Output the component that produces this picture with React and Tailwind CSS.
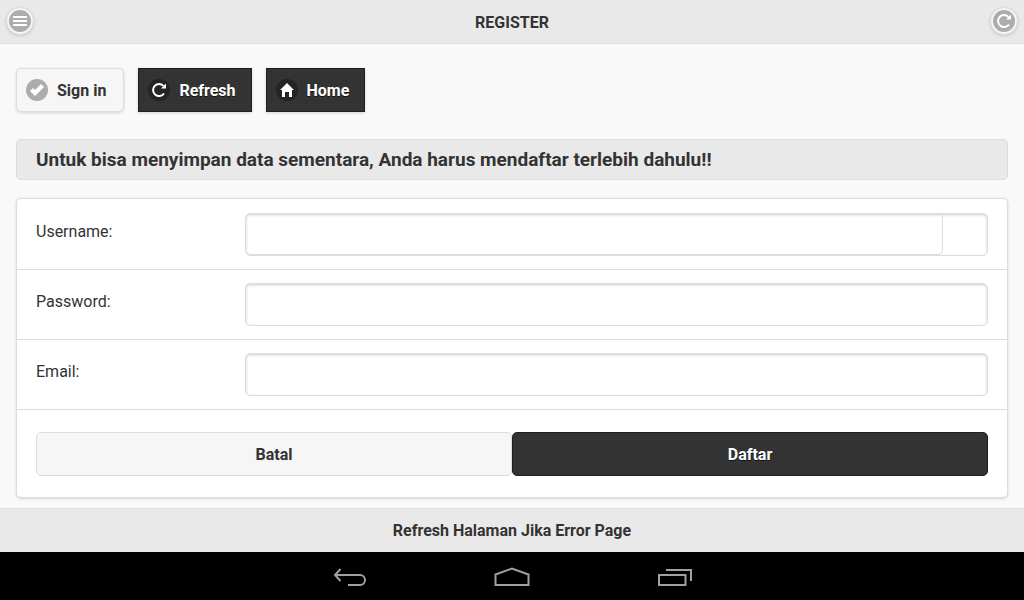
import { useState } from 'react'

function BarsIcon() {
  return (
    <svg viewBox="0 0 14 14" className="size-3.5" fill="#fff" aria-hidden="true">
      <rect y="2" width="14" height="2" rx="0.500" />
      <rect y="6" width="14" height="2" rx="0.500" />
      <rect y="10" width="14" height="2" rx="0.500" />
    </svg>
  )
}

function CheckIcon() {
  return (
    <svg viewBox="0 0 14 14" className="size-3.5" fill="#fff" aria-hidden="true">
      <polygon points="14,4 11,1 5,7 3,5 0,8 5,13" />
    </svg>
  )
}

function RefreshIcon() {
  return (
    <svg viewBox="0 0 14 14" className="size-3.5" fill="#fff" aria-hidden="true">
      <path d="M12 10.500A6 6 0 1 1 11.400 2.900" fill="none" stroke="#fff" strokeWidth="2" />
      <polygon points="14,0.500 14,5.500 9,5.500" />
    </svg>
  )
}

function HomeIcon() {
  return (
    <svg viewBox="0 0 14 14" className="size-3.5" fill="#fff" aria-hidden="true">
      <polygon points="7,0 0,7 2,7 2,14 5,14 5,9 9,9 9,14 12,14 12,7 14,7" />
    </svg>
  )
}

function RoundButton({ label, children }) {
  return (
    <button
      type="button"
      aria-label={label}
      className="flex size-7 items-center justify-center rounded-full border border-[#ddd] bg-[#f6f6f6] shadow-[0_1px_3px_rgba(0,0,0,0.15)]"
    >
      <span className="flex size-[22px] shrink-0 items-center justify-center rounded-full bg-[#acacac]">
        {children}
      </span>
    </button>
  )
}

function LinkButton({ dark, icon, children }) {
  return (
    <a
      href="#"
      className={`flex h-11 items-center gap-[9px] border pl-[9px] font-bold shadow-[0_1px_3px_rgba(0,0,0,0.15)] ${
        dark
          ? 'border-[#1f1f1f] bg-[#333] pr-[15px] text-white [text-shadow:0_1px_0_#111]'
          : 'rounded-[5px] border-[#ddd] bg-[#f6f6f6] pr-[17px] text-[#333] [text-shadow:0_1px_0_#f3f3f3]'
      }`}
    >
      <span
        className={`flex size-[22px] items-center justify-center rounded-full ${
          dark ? 'bg-[#242424]' : 'bg-[#acacac]'
        }`}
      >
        {icon}
      </span>
      <span className="pt-0.5">{children}</span>
    </a>
  )
}

function Field({ id, label, children }) {
  return (
    <div className="grid h-[70px] grid-cols-[22%_78%] border-b border-[#ddd] px-[19px] pt-[13px]">
      <label htmlFor={id} className="pt-[7px]">{label}</label>
      {children}
    </div>
  )
}

const boxStyle =
  'h-[43px] w-full rounded-[5px] border border-[#ddd] bg-white shadow-[inset_0_1px_3px_rgba(0,0,0,0.2)]'

export default function App() {
  const [form, setForm] = useState({ username: '', password: '', email: '' })

  const handleChange = (e) => {
    setForm({ ...form, [e.target.name]: e.target.value })
  }

  return (
    <div className="flex min-h-screen flex-col bg-[#f9f9f9] font-[Roboto,sans-serif] text-base/6 text-[#333]">
      <header className="flex h-11 items-center justify-between border-b border-[#ddd] bg-[#e9e9e9] px-1.5 pb-px">
        <RoundButton label="Menu"><BarsIcon /></RoundButton>
        <h1 className="pt-1 font-bold [text-shadow:0_1px_0_#eee]">REGISTER</h1>
        <RoundButton label="Refresh"><RefreshIcon /></RoundButton>
      </header>

      <main className="flex-1 px-4 pt-6 pb-2.5">
        <nav className="flex gap-3.5">
          <LinkButton icon={<CheckIcon />}>Sign in</LinkButton>
          <LinkButton dark icon={<RefreshIcon />}>Refresh</LinkButton>
          <LinkButton dark icon={<HomeIcon />}>Home</LinkButton>
        </nav>

        <h2 className="mt-[27px] rounded-[5px] border border-[#ddd] bg-[#e9e9e9] px-[19px] py-[7px] text-[19px]/[25px] font-bold [text-shadow:0_1px_0_#eee]">
          Untuk bisa menyimpan data sementara, Anda harus mendaftar terlebih dahulu!!
        </h2>

        <form
          onSubmit={(e) => e.preventDefault()}
          className="mt-[18px] rounded-[5px] border border-[#ddd] bg-white pt-px shadow-[0_1px_3px_rgba(0,0,0,0.15)]"
        >
          <Field id="username" label="Username:">
            <div className={`${boxStyle} pr-11`}>
              <input
                id="username"
                name="username"
                value={form.username}
                onChange={handleChange}
                className="h-full w-full rounded-[5px] border-r border-b border-[#ddd] px-2 outline-none"
              />
            </div>
          </Field>
          <Field id="password" label="Password:">
            <input
              id="password"
              name="password"
              type="password"
              value={form.password}
              onChange={handleChange}
              className={`${boxStyle} px-2 outline-none`}
            />
          </Field>
          <Field id="email" label="Email:">
            <input
              id="email"
              name="email"
              type="email"
              value={form.email}
              onChange={handleChange}
              className={`${boxStyle} px-2 outline-none`}
            />
          </Field>
          <div className="grid grid-cols-2 px-[19px] pt-[22px] pb-[21px]">
            <button
              type="reset"
              className="h-11 rounded-[5px] border border-[#ddd] bg-[#f6f6f6] pt-0.5 font-bold [text-shadow:0_1px_0_#f3f3f3]"
            >
              Batal
            </button>
            <button
              type="submit"
              className="h-11 rounded-[5px] border border-[#1f1f1f] bg-[#333] pt-0.5 font-bold text-white [text-shadow:0_1px_0_#111]"
            >
              Daftar
            </button>
          </div>
        </form>
      </main>

      <footer className="flex h-11 items-center justify-center border-t border-[#ddd] bg-[#e9e9e9]">
        <h2 className="font-bold [text-shadow:0_1px_0_#eee]">Refresh Halaman Jika Error Page</h2>
      </footer>

      {/* Android navigation bar */}
      <div className="flex h-12 items-center justify-center gap-[124px] bg-black">
        <button type="button" aria-label="Back">
          <svg width="40" height="24" viewBox="0 0 40 24" fill="none" stroke="#a0a0a0" strokeWidth="2">
            <path d="M7 11H32A5 5 0 0 1 32 21H20M12.500 5L7 11L12.500 17" />
          </svg>
        </button>
        <button type="button" aria-label="Home">
          <svg width="40" height="24" viewBox="0 0 40 24" fill="none" stroke="#a0a0a0" strokeWidth="2">
            <path d="M3.500 21V10.500L20 4.500L36.500 10.500V21Z" />
          </svg>
        </button>
        <button type="button" aria-label="Recent apps">
          <svg width="40" height="24" viewBox="0 0 40 24" fill="none" stroke="#a0a0a0" strokeWidth="2">
            <path d="M3 11H29.500V21H3ZM10 6H35V17" />
          </svg>
        </button>
      </div>
    </div>
  )
}
